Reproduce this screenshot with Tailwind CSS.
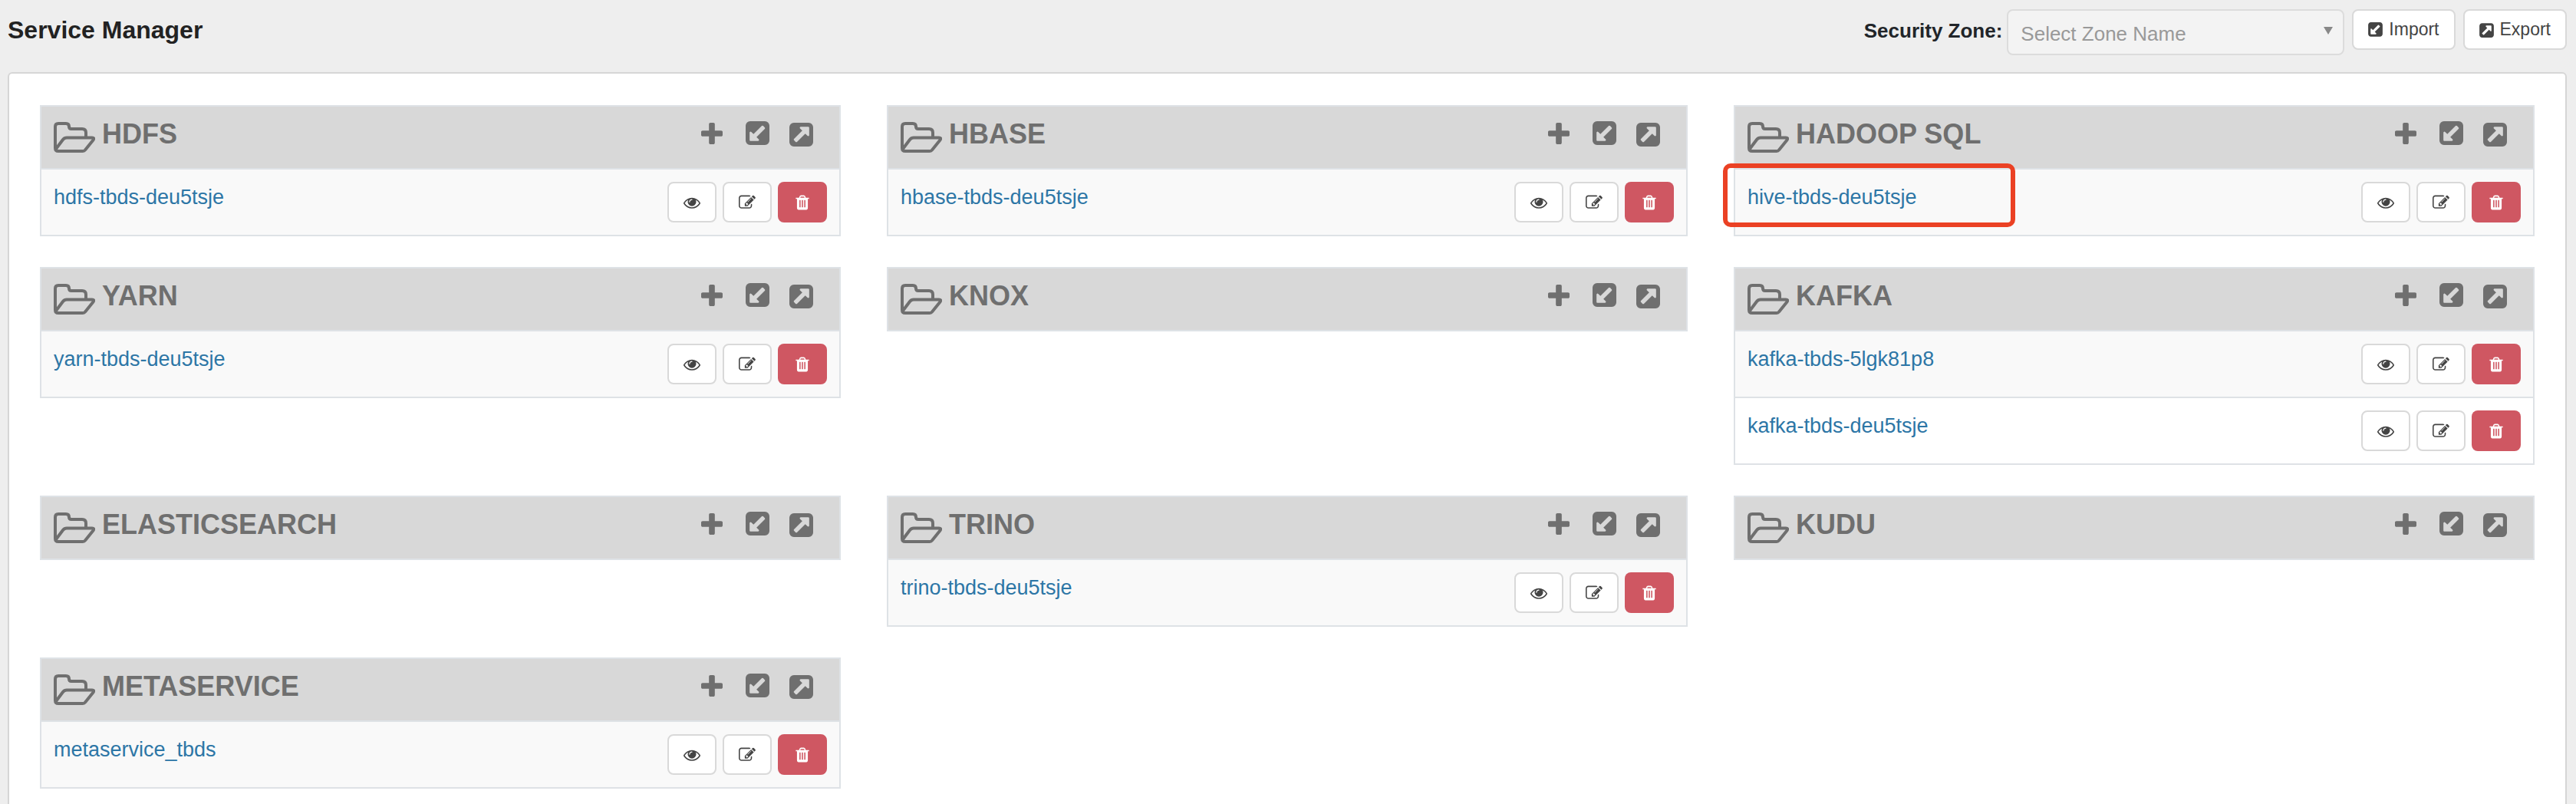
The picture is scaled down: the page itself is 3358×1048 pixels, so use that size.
<!DOCTYPE html>
<html lang="en">
<head>
    <meta charset="UTF-8">
    <meta name="viewport" content="width=device-width, initial-scale=1.0">
    <title>Service Manager</title>
    <script src="https://cdn.jsdelivr.net/npm/@tailwindcss/browser@4"></script>
</head>
<body class="flex min-h-screen flex-col bg-[#eeeeee] font-['Liberation_Sans',Arial,sans-serif]">

<!-- Icon sprite -->
<svg class="hidden">
    <symbol id="icon-folder" viewBox="0 0 54 40">
        <path d="M42 20V14q0-5-5-5H23q-3 0-3-3 0-4-4-4H6Q2 2 2 6V34q0 4 4 4H38q2 0 3-1.500L51.500 23.500q2-3-1.500-3H17q-3 0-5 2.500L3 35" fill="none" stroke="currentColor" stroke-width="4" stroke-linejoin="round"/>
    </symbol>
    <symbol id="icon-plus" viewBox="192 128 1408 1408">
        <path d="M1600 736v192q0 40-28 68t-68 28h-416v416q0 40-28 68t-68 28h-192q-40 0-68-28t-28-68v-416h-416q-40 0-68-28t-28-68v-192q0-40 28-68t68-28h416v-416q0-40 28-68t68-28h192q40 0 68 28t28 68v416h416q40 0 68 28t28 68z" fill="currentColor"/>
    </symbol>
    <symbol id="icon-link-square" viewBox="128 28 1536 1636">
        <path d="M1408 928v-480q0-26-19-45t-45-19h-480q-42 0-59 39-17 41 14 70l144 144-534 534q-19 19-19 45t19 45l102 102q19 19 45 19t45-19l534-534 144 144q18 19 45 19 12 0 25-5 39-17 39-59zm256-512v960q0 119-84.5 203.5t-203.5 84.5h-960q-119 0-203.5-84.5t-84.5-203.5v-960q0-119 84.500-203.500t203.500-84.500h960q119 0 203.500 84.500t84.500 203.500z" fill="currentColor"/>
    </symbol>
    <symbol id="icon-eye" viewBox="0 0 1792 1792">
        <path d="M1664 960q-152-236-381-353 61 104 61 225 0 185-131.500 316.500t-316.500 131.500-316.500-131.500-131.500-316.500q0-121 61-225-229 117-381 353 133 205 333.500 326.500t434.500 121.500 434.500-121.500 333.500-326.500zm-720-384q0-20-14-34t-34-14q-125 0-214.500 89.500t-89.500 214.500q0 20 14 34t34 14 34-14 14-34q0-86 61-147t147-61q20 0 34-14t14-34zm848 384q0 34-20 69-140 230-376.500 368.500t-499.500 138.500-499.500-139-376.500-368q-20-35-20-69t20-69q140-229 376.500-368t499.500-139 499.500 139 376.500 368q20 35 20 69z" fill="currentColor"/>
    </symbol>
    <symbol id="icon-edit" viewBox="0 0 1792 1792">
        <path d="M888 1184l116-116-152-152-116 116v56h96v96h56zm440-720q-16-16-33 1l-350 350q-17 17-1 33t33-1l350-350q17-17 1-33zm80 594v190q0 119-84.500 203.500t-203.500 84.500h-832q-119 0-203.500-84.500t-84.500-203.500v-832q0-119 84.500-203.500t203.500-84.500h832q63 0 117 25 15 7 18 23 3 17-9 29l-49 49q-14 14-32 8-23-6-45-6h-832q-66 0-113 47t-47 113v832q0 66 47 113t113 47h832q66 0 113-47t47-113v-126q0-13 9-22l64-64q15-15 35-7t20 29zm-96-738l288 288-672 672h-288v-288zm444 132l-92 92-288-288 92-92q28-28 68-28t68 28l152 152q28 28 28 68t-28 68z" fill="currentColor"/>
    </symbol>
    <symbol id="icon-trash" viewBox="0 0 1792 1792">
        <path d="M704 1376v-704q0-14-9-23t-23-9h-64q-14 0-23 9t-9 23v704q0 14 9 23t23 9h64q14 0 23-9t9-23zm256 0v-704q0-14-9-23t-23-9h-64q-14 0-23 9t-9 23v704q0 14 9 23t23 9h64q14 0 23-9t9-23zm256 0v-704q0-14-9-23t-23-9h-64q-14 0-23 9t-9 23v704q0 14 9 23t23 9h64q14 0 23-9t9-23zm-544-992h448l-48-117q-7-9-17-11h-317q-10 2-17 11zm928 32v64q0 14-9 23t-23 9h-96v948q0 83-47 143.500t-113 60.500h-832q-66 0-113-58.500t-47-141.500v-952h-96q-14 0-23-9t-9-23v-64q0-14 9-23t23-9h309l70-167q15-37 54-63t79-26h320q40 0 79 26t54 63l70 167h309q14 0 23 9t9 23z" fill="currentColor"/>
    </symbol>
</svg>

<!-- Page header -->
<header class="flex items-start justify-between pt-3 pr-3 pb-[22px] pl-[10px]">
    <h1 class="text-[32px] leading-[54px] font-bold text-[#222222]">Service Manager</h1>
    <div class="flex items-start gap-[10px]">
        <div class="flex items-start gap-[6px]">
            <label for="zone-select" class="text-[26px] leading-[56px] font-bold text-[#212529]">Security Zone:</label>
            <div class="relative">
                <select id="zone-select" class="h-[60px] w-[440px] appearance-none rounded-lg border-2 border-[#dcdcdc] bg-[#f3f3f3] px-4 pt-1 text-[26px] text-[#999999]">
                    <option>Select Zone Name</option>
                </select>
                <svg viewBox="0 0 12 10" class="pointer-events-none absolute top-[23px] right-[15px] h-[10px] w-[12px] text-[#888888]"><path d="M0 0h12L6 10z" fill="currentColor"/></svg>
            </div>
        </div>
        <button type="button" class="flex h-[53px] items-center gap-2 rounded-lg border-2 border-[#d9d9d9] bg-white px-[19px] text-[23px] text-[#444444]">
            <svg class="h-5 w-[19px] rotate-180"><use href="#icon-link-square"/></svg>Import
        </button>
        <button type="button" class="flex h-[53px] items-center gap-2 rounded-lg border-2 border-[#d9d9d9] bg-white px-[19px] text-[23px] text-[#444444]">
            <svg class="h-5 w-[19px]"><use href="#icon-link-square"/></svg>Export
        </button>
    </div>
</header>

<!-- Services -->
<main class="mr-3 ml-[10px] grow rounded-md border-2 border-[#d6d6d6] bg-white px-10 py-[41px]">
    <div id="services" class="grid grid-cols-3 items-start gap-x-[60px] gap-y-10">
        <!-- Service cards will be populated from the list below -->
    </div>
</main>

<script>
    const services = [
        { name: 'HDFS', items: ['hdfs-tbds-deu5tsje'] },
        { name: 'HBASE', items: ['hbase-tbds-deu5tsje'] },
        { name: 'HADOOP SQL', items: ['hive-tbds-deu5tsje'] },
        { name: 'YARN', items: ['yarn-tbds-deu5tsje'] },
        { name: 'KNOX', items: [] },
        { name: 'KAFKA', items: ['kafka-tbds-5lgk81p8', 'kafka-tbds-deu5tsje'] },
        { name: 'ELASTICSEARCH', items: [] },
        { name: 'TRINO', items: ['trino-tbds-deu5tsje'] },
        { name: 'KUDU', items: [] },
        { name: 'METASERVICE', items: ['metaservice_tbds'] }
    ];
    const marked = 'hive-tbds-deu5tsje';

    const itemRow = (item) => `
        <li class="relative flex items-start justify-between border-t-2 border-[#dee2e6] p-4 odd:bg-[#f9f9f9]">
            <a href="#" class="text-[27px] leading-10 text-[#2d76a6]">${item}</a>
            <div class="flex gap-2">
                <button type="button" aria-label="View" class="flex h-[53px] w-16 items-center justify-center rounded-lg border-2 border-[#d9d9d9] bg-white text-[#444444]"><svg class="size-[22px]"><use href="#icon-eye"/></svg></button>
                <button type="button" aria-label="Edit" class="flex h-[53px] w-16 items-center justify-center rounded-lg border-2 border-[#d9d9d9] bg-white text-[#444444]"><svg class="size-[22px]"><use href="#icon-edit"/></svg></button>
                <button type="button" aria-label="Delete" class="flex h-[53px] w-16 items-center justify-center rounded-lg bg-[#cf5762] text-white"><svg class="size-[22px]"><use href="#icon-trash"/></svg></button>
            </div>
            ${item === marked ? '<span class="pointer-events-none absolute -top-2 -left-4 h-[83px] w-[381px] rounded-[10px] border-[6px] border-[#eb4124]"></span>' : ''}
        </li>`;

    document.getElementById('services').innerHTML = services.map((service) => `
        <section class="border-2 border-[#dee2e6]">
            <div class="flex h-20 items-start justify-between bg-[#d8d8d8] pt-4 pr-[34px] pl-4 text-[#6f6f6f]">
                <div class="flex items-start gap-[9px]">
                    <svg class="mt-1 h-10 w-[54px]"><use href="#icon-folder"/></svg>
                    <h2 class="text-[36px] leading-10 font-bold">${service.name}</h2>
                </div>
                <div class="flex h-[38px] items-center">
                    <button type="button" aria-label="Add" class="mr-[30px]"><svg class="size-7"><use href="#icon-plus"/></svg></button>
                    <button type="button" aria-label="Import" class="mr-[26px]"><svg class="h-[33px] w-[31px] rotate-180"><use href="#icon-link-square"/></svg></button>
                    <button type="button" aria-label="Export"><svg class="h-[33px] w-[31px]"><use href="#icon-link-square"/></svg></button>
                </div>
            </div>
            ${service.items.length ? `<ul>${service.items.map(itemRow).join('')}</ul>` : ''}
        </section>`).join('');
</script>
</body>
</html>
